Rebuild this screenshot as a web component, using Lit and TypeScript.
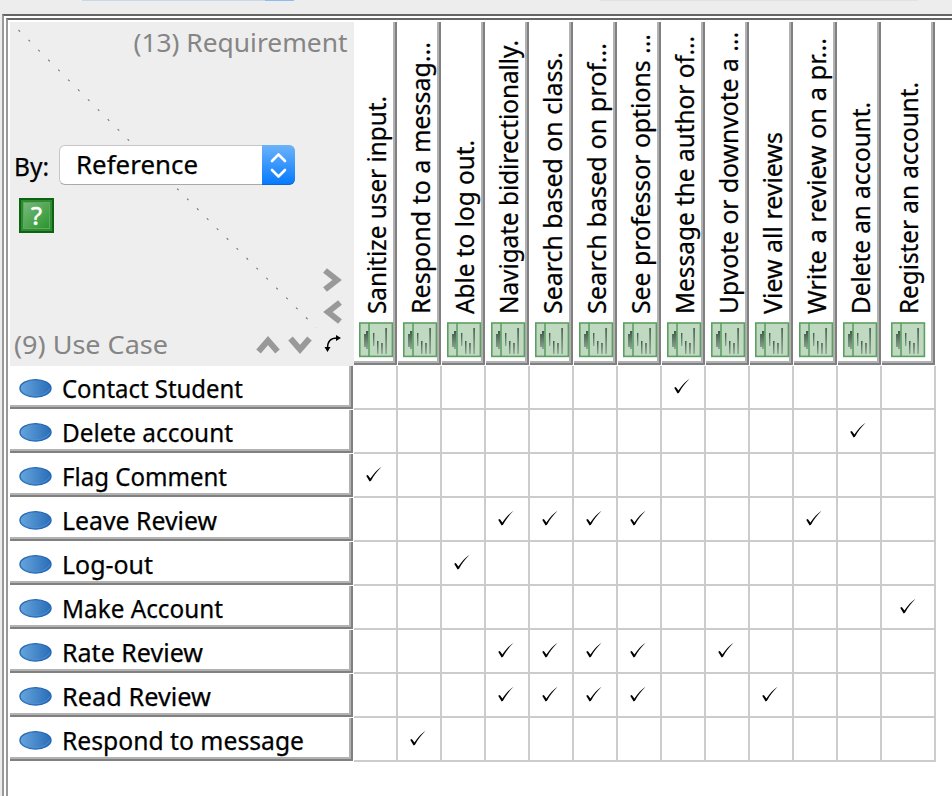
import { LitElement, html, svg, css } from "lit";
import { customElement } from "lit/decorators.js";

interface Column { label: string; width: number; top: number; }
interface Row { label: string; length: number; marks: number[]; }

// top: the y at which the rotated label ends
const columns: Column[] = [
  { label: "Sanitize user input.", width: 44, top: 97 },
  { label: "Respond to a messag...", width: 44, top: 43 },
  { label: "Able to log out.", width: 44, top: 141 },
  { label: "Navigate bidirectionally.", width: 44, top: 41 },
  { label: "Search based on class.", width: 44, top: 53 },
  { label: "Search based on prof...", width: 44, top: 44 },
  { label: "See professor options ...", width: 44, top: 35 },
  { label: "Message the author of...", width: 44, top: 37 },
  { label: "Upvote or downvote a ...", width: 44, top: 33 },
  { label: "View all reviews", width: 44, top: 133 },
  { label: "Write a review on a pr...", width: 44, top: 39 },
  { label: "Delete an account.", width: 44, top: 103 },
  { label: "Register an account.", width: 54, top: 83 },
];

const rows: Row[] = [
  { label: "Contact Student", length: 181, marks: [7] },
  { label: "Delete account", length: 171, marks: [11] },
  { label: "Flag Comment", length: 165, marks: [0] },
  { label: "Leave Review", length: 155, marks: [3, 4, 5, 6, 10] },
  { label: "Log-out", length: 91, marks: [2] },
  { label: "Make Account", length: 161, marks: [12] },
  { label: "Rate Review", length: 141, marks: [3, 4, 5, 6, 8] },
  { label: "Read Review", length: 149, marks: [3, 4, 5, 6, 9] },
  { label: "Respond to message", length: 242, marks: [1] },
];

const check = html`<svg class="check" width="18" height="18" viewBox="0 0 18 18">
  <path d="M1.2 9.8 L2.8 9 L5.4 12.6 C8.5 8 12 3.8 16.6 .8 C12.4 5 9 9.3 6 14.8 L4.6 15.6 Z" />
</svg>`;

const useCase = html`<svg class="oval" width="34" height="20" viewBox="0 0 34 20">
  <defs><linearGradient id="o"><stop offset="0" stop-color="#66a5dc" /><stop offset="1" stop-color="#2a6db8" /></linearGradient></defs>
  <ellipse cx="16.5" cy="9.3" rx="15.5" ry="8.7" fill="url(#o)" stroke="#2569b7" stroke-width="1.4" />
  <path d="M3 12.600 C8 18.900 27 18.600 30.5 9.600" fill="none" stroke="#5596d4" stroke-width=".7" />
</svg>`;

const requirement = html`<svg class="req" width="35" height="36" viewBox="0 0 35 36">
  <defs><linearGradient id="r" x1="0" y1="0" x2="0" y2="1"><stop offset="0" stop-color="#41594a" /><stop offset="1" stop-color="#8ba892" /></linearGradient></defs>
  <rect x="1.8" y="1" width="32.6" height="33.4" fill="#c0dac1" stroke="#5d9e61" stroke-width="1.6" />
  <rect x="10.2" y="1" width="1.6" height="33.4" fill="#5d9e61" />
  <path d="M6 12h2V9h2.200v18H8v-2H6z" fill="url(#r)" />
  <rect x="15" y="11" width="1.4" height="13" fill="url(#r)" />
  <rect x="19" y="19" width="1.5" height="13" fill="url(#r)" />
  <rect x="23.2" y="21" width="1.5" height="11" fill="url(#r)" />
  <rect x="27.3" y="6" width="1.6" height="26" fill="url(#r)" />
</svg>`;

@customElement("app-root")
export class AppRoot extends LitElement {
  static styles = css`
    :host { display: block; width: 952px; height: 796px; overflow: hidden; background: #ededed; font-family: "Noto Sans", sans-serif; color: #000; }
    * { box-sizing: border-box; }
    svg { display: block; overflow: visible; }
    .toolbar { height: 14px; padding-left: 82px; display: flex; align-items: flex-start; }
    .edge1 { width: 183px; height: 1px; background: #c8d8e8; }
    .edge2 { width: 29px; height: 1px; background: #8bbdf2; }
    .edge3 { width: 318px; height: 1px; margin-left: 306px; background: #e2e2e2; }
    .outer { margin-left: 2px; height: 790px; border-top: 2px solid #666; border-left: 2px solid #999; background: #fff; padding: 2px 0 0 2px; }
    .inner { height: 100%; border-top: 2px solid #666; border-left: 2px solid #999; padding: 2px 0 0 2px; }
    .top { display: flex; height: 344px; }
    .corner { width: 344px; height: 344px; background: #eee; position: relative; flex: none; }
    .corner > svg { position: absolute; inset: 0; }
    .corner text { fill: #858585; font-size: 25.5px; }
    .corner .dark { fill: #000; stroke: #000; stroke-width: .25px; }
    .combo { position: absolute; left: 49px; top: 123px; width: 236px; height: 40px; border-radius: 6px; border: 1px solid #c6c6c6; border-bottom-color: #aaa; background: #fff; display: flex; justify-content: space-between; }
    .combo .text { margin-left: 16px; }
    .knob { width: 33px; height: 40px; margin: -1px -1px 0 0; border-radius: 0 6px 6px 0; background: linear-gradient(#6cb3fa, #067aff); border-bottom: 1px solid #1265d2; }
    .help { position: absolute; left: 9px; top: 176px; width: 35px; height: 35px; border: 2px solid #0c6411; background: linear-gradient(135deg, #82bd83, #229126); }
    .help .bevel { width: 31px; height: 31px; border: 2px solid #2f8c34; outline: 1px solid #5eaa60; outline-offset: -3px; }
    .corner .mark { fill: #fff; stroke: #fff; stroke-width: .5px; }
    .head { height: 344px; padding-right: 1px; flex: none; }
    .head .face { height: 343px; border-right: 2px solid #808080; border-bottom: 2px solid #808080; }
    .head .lip { height: 341px; border-right: 2px solid #b2b2b2; border-bottom: 2px solid #b2b2b2; display: flex; flex-direction: column; align-items: flex-start; }
    .head .label { width: 39px; height: 300px; flex: none; }
    .head .req { flex: none; margin-left: 4px; }
    .head.wide .req { margin-left: 8px; }
    .label text, .caption text { font-size: 25px; stroke: #000; stroke-width: .25px; }
    .line { display: flex; height: 44px; }
    .name { width: 343px; height: 43px; margin-right: 1px; border-right: 2px solid #808080; border-bottom: 2px solid #808080; flex: none; }
    .name .lip { height: 41px; border-right: 2px solid #b2b2b2; border-bottom: 2px solid #b2b2b2; display: flex; align-items: flex-start; }
    .oval { margin: 13px 0 0 9px; }
    .name .caption { margin-left: 9px; }
    .cell { height: 44px; border-right: 2px solid #ccc; border-bottom: 2px solid #ccc; flex: none; }
    .check { margin: 12px 0 0 11px; }
    .cell.wide .check { margin-left: 17px; }
  `;

  renderCorner() {
    return html`<div class="corner">
      <svg width="344" height="344" viewBox="0 0 344 344">
        <line x1="8.5" y1="8" x2="306" y2="305.5" stroke="#777" stroke-width="1.1" stroke-dasharray="2.2 11.82" />
        <text x="123.500" y="30" textLength="214" lengthAdjust="spacingAndGlyphs">(13) Requirement</text>
        <text x="4" y="332" textLength="154" lengthAdjust="spacingAndGlyphs">(9) Use Case</text>
        <text class="dark" x="4" y="154" textLength="35" lengthAdjust="spacingAndGlyphs">By:</text>
        <g fill="none" stroke="#999" stroke-width="6">
          <path d="M315 248.500L327 258L315 267.500" />
          <path d="M330 280.500L318 290L330 299.500" />
          <path d="M248.500 329.500L258 318.500L267.500 329.500" />
          <path d="M280.500 316.500L290 327.500L299.500 316.500" />
        </g>
        <path d="M317.500 326C317.500 319 321 316 327 316" fill="none" stroke="#000" stroke-width="1.4" />
        <path d="M314.500 325H320.500L317.500 330ZM326 313L331 316L326 319Z" />
      </svg>
      <div class="combo">
        <svg class="text" width="124" height="38"><text class="dark" x="0" y="28" textLength="122" lengthAdjust="spacingAndGlyphs">Reference</text></svg>
        <div class="knob"><svg width="33" height="40"><path d="M10 16L16.500 9.500L23 16M10 25L16.500 31.500L23 25" fill="none" stroke="#fff" stroke-width="2.6" stroke-linecap="round" stroke-linejoin="round" /></svg></div>
      </div>
      <div class="help"><div class="bevel"><svg width="27" height="27"><text class="mark" x="13.500" y="23" text-anchor="middle">?</text></svg></div></div>
    </div>`;
  }

  renderHead(c: Column) {
    const length = 315 - c.top;
    const wide = c.width > 44;
    return html`<div class="head ${wide ? "wide" : ""}" style="width:${c.width}px"><div class="face"><div class="lip">
      <svg class="label" width="39" height="300">${svg`<text transform="translate(${wide ? 36 : 32} 292) rotate(-90)" textLength=${length} lengthAdjust="spacingAndGlyphs">${c.label}</text>`}</svg>
      ${requirement}
    </div></div></div>`;
  }

  render() {
    return html`
      <div class="toolbar"><div class="edge1"></div><div class="edge2"></div><div class="edge3"></div></div>
      <div class="outer"><div class="inner">
        <div class="top">${this.renderCorner()}${columns.map((c) => this.renderHead(c))}</div>
        ${rows.map((r) => html`<div class="line">
          <div class="name"><div class="lip">${useCase}
            <svg class="caption" width="280" height="38"><text x="0" y="32" textLength=${r.length} lengthAdjust="spacingAndGlyphs">${r.label}</text></svg>
          </div></div>
          ${columns.map((c, i) => html`<div class="cell ${c.width > 44 ? "wide" : ""}" style="width:${c.width}px">${r.marks.includes(i) ? check : ""}</div>`)}
        </div>`)}
      </div></div>`;
  }
}
